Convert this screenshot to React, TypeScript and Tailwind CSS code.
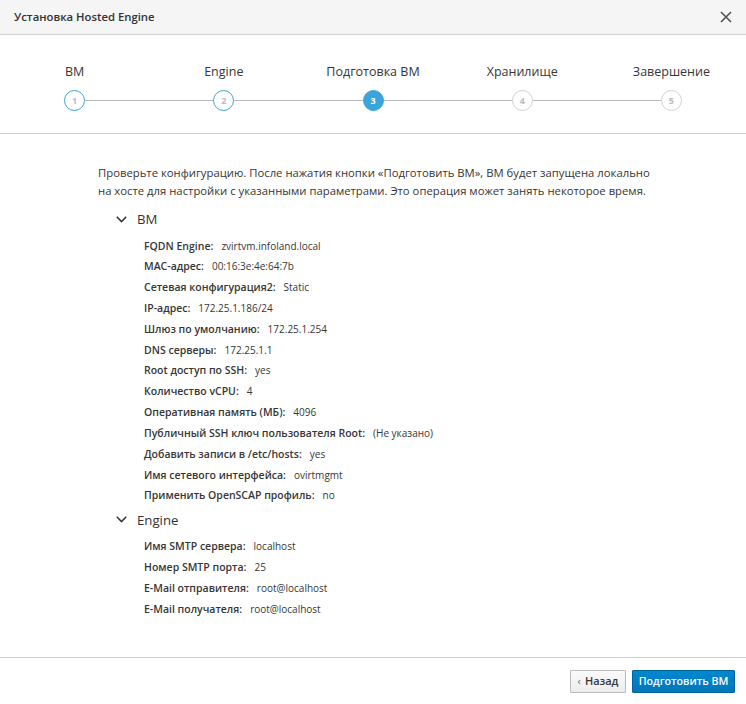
import React from "react";

const steps = [
  { n: 1, label: "ВМ", state: "done" },
  { n: 2, label: "Engine", state: "done" },
  { n: 3, label: "Подготовка ВМ", state: "current" },
  { n: 4, label: "Хранилище", state: "todo" },
  { n: 5, label: "Завершение", state: "todo" },
];

const vmRows: [string, string][] = [
  ["FQDN Engine:", "zvirtvm.infoland.local"],
  ["MAC-адрес:", "00:16:3e:4e:64:7b"],
  ["Сетевая конфигурация2:", "Static"],
  ["IP-адрес:", "172.25.1.186/24"],
  ["Шлюз по умолчанию:", "172.25.1.254"],
  ["DNS серверы:", "172.25.1.1"],
  ["Root доступ по SSH:", "yes"],
  ["Количество vCPU:", "4"],
  ["Оперативная память (МБ):", "4096"],
  ["Публичный SSH ключ пользователя Root:", "(Не указано)"],
  ["Добавить записи в /etc/hosts:", "yes"],
  ["Имя сетевого интерфейса:", "ovirtmgmt"],
  ["Применить OpenSCAP профиль:", "no"],
];

const engineRows: [string, string][] = [
  ["Имя SMTP сервера:", "localhost"],
  ["Номер SMTP порта:", "25"],
  ["E-Mail отправителя:", "root@localhost"],
  ["E-Mail получателя:", "root@localhost"],
];

function Chevron() {
  return (
    <svg width="11" height="7" viewBox="0 0 11 7" className="shrink-0">
      <polyline points="0.8,0.8 5.5,5.6 10.2,0.8" fill="none" stroke="#333" strokeWidth="1.5" />
    </svg>
  );
}

function Section({ title, rows, className }: { title: string; rows: [string, string][]; className?: string }) {
  return (
    <div className={className}>
      <div className="flex h-[20px] items-center pl-[18px]">
        <Chevron />
        <span className="ml-[10px] text-[13.2px] leading-[20px] text-[#333]">{title}</span>
      </div>
      <div className="mt-[6.5px] pl-[46px]">
        {rows.map(([k, v]) => (
          <div key={k} className="flex h-[20.83px] items-baseline whitespace-nowrap leading-[20.83px] text-[#363636]">
            <span className="text-[10.5px] font-semibold">{k}</span>
            <span className="ml-[8px] text-[10px]">{v}</span>
          </div>
        ))}
      </div>
    </div>
  );
}

function StepCircle({ n, state }: { n: number; state: string }) {
  if (state === "current") {
    return (
      <div className="flex h-[21px] w-[21px] shrink-0 items-center justify-center rounded-full border-[1.5px] border-[#39a5dc] bg-[#39a5dc] text-[9px] font-bold text-white">
        {n}
      </div>
    );
  }
  const border = state === "done" ? "border-[#39a5dc]" : "border-[#d1d1d1]";
  return (
    <div
      className={`flex h-[21px] w-[21px] shrink-0 items-center justify-center rounded-full border-[1.5px] ${border} bg-white text-[9px] font-bold text-[#bbbbbb]`}
    >
      {n}
    </div>
  );
}

export default function App() {
  return (
    <div
      className="flex h-[704px] w-[746px] flex-col bg-white text-[#363636]"
      style={{ fontFamily: '"Open Sans", "Noto Sans", sans-serif' }}
    >
      <div className="flex h-[35px] shrink-0 items-center justify-between border-b border-[#d1d1d1] bg-[#f5f5f5] pl-[14px] pr-[14px]">
        <span className="text-[11.3px] font-semibold text-[#333]">Установка Hosted Engine</span>
        <svg width="12" height="12" viewBox="0 0 12 12">
          <path d="M1 1 L11 11 M11 1 L1 11" stroke="#4d5258" strokeWidth="1.6" />
        </svg>
      </div>

      <div className="grid h-[99px] shrink-0 grid-cols-5 border-b border-[#d1d1d1] pt-[27px]">
        {steps.map((s, i) => (
          <div key={s.n} className="flex flex-col items-center">
            <div className="h-[20px] whitespace-nowrap text-[12.5px] leading-[20px] text-[#363636]">{s.label}</div>
            <div className="mt-[8px] flex w-full items-center">
              <div className={`h-px flex-1 ${i === 0 ? "" : "bg-[#bbbbbb]"}`} />
              <StepCircle n={s.n} state={s.state} />
              <div className={`h-px flex-1 ${i === steps.length - 1 ? "" : "bg-[#bbbbbb]"}`} />
            </div>
          </div>
        ))}
      </div>

      <div className="flex-1 px-[98px] pt-[30px]">
        <p className="whitespace-nowrap text-[11.3px] leading-[18px] text-[#363636]">
          Проверьте конфигурацию. После нажатия кнопки «Подготовить ВМ», ВМ будет запущена локально
          <br />
          на хосте для настройки с указанными параметрами. Это операция может занять некоторое время.
        </p>
        <Section title="ВМ" rows={vmRows} className="mt-[9px]" />
        <Section title="Engine" rows={engineRows} className="mt-[3.6px]" />
      </div>

      <div className="flex h-[47px] shrink-0 items-start justify-end gap-[6px] border-t border-[#d1d1d1] pr-[11px] pt-[12px]">
        <button className="flex h-[23px] w-[56px] items-center justify-center rounded-[1px] border border-[#bbbbbb] bg-gradient-to-b from-[#fafafa] to-[#ededed] text-[11px] font-semibold text-[#363636]">
          <span className="mr-[4px] text-[11px] font-normal text-[#6a6a6a]">‹</span>Назад
        </button>
        <button className="flex h-[23px] w-[103px] items-center justify-center rounded-[1px] border border-[#00659c] bg-gradient-to-b from-[#0088ce] to-[#0077b8] text-[10.7px] font-semibold text-white">
          Подготовить ВМ
        </button>
      </div>
    </div>
  );
}
